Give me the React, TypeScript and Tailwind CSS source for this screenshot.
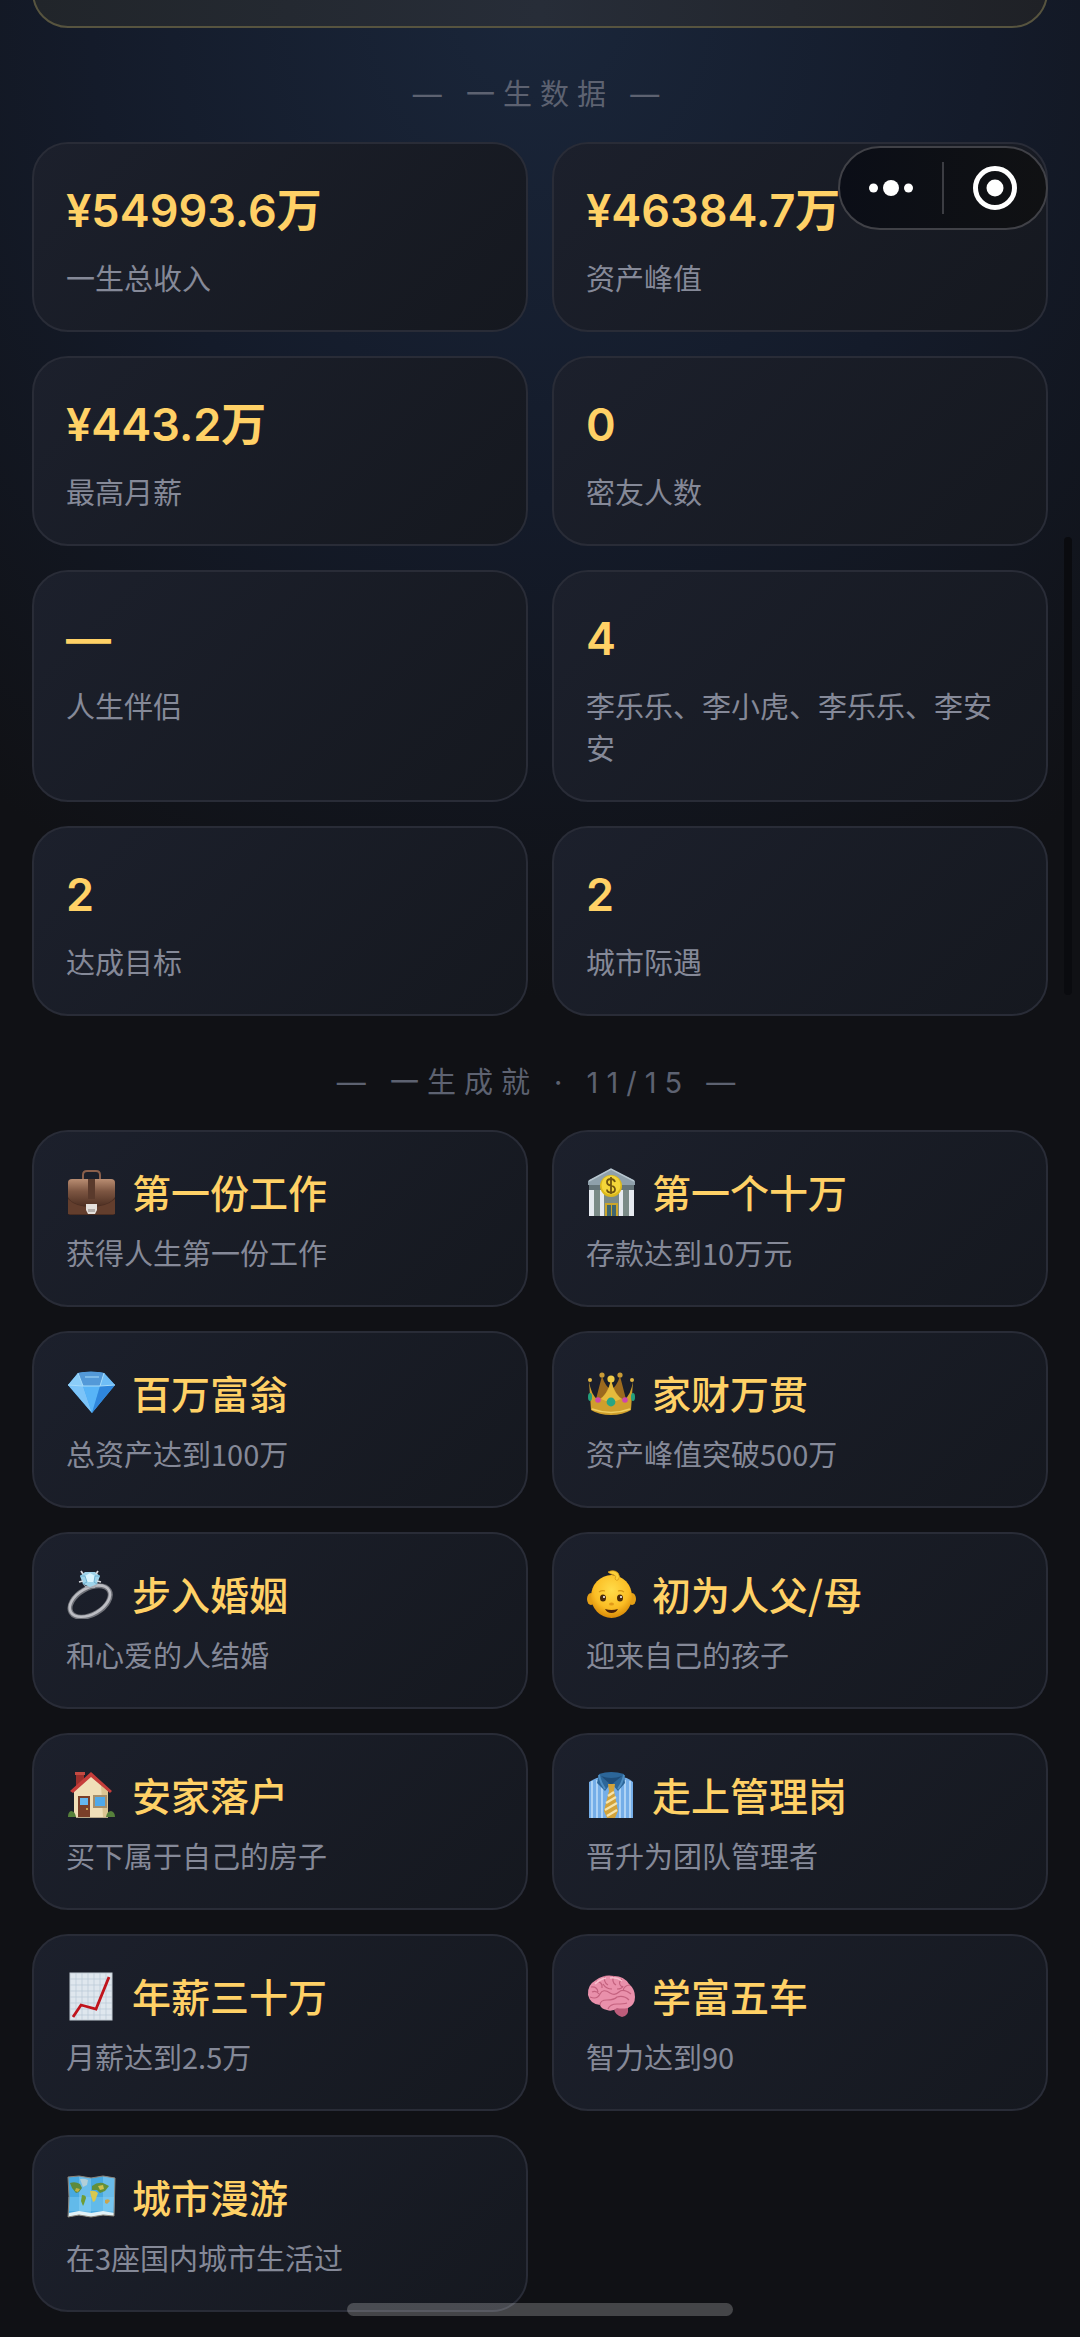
import type { ReactNode } from "react";

const stats = [
  { value: "¥54993.6万", label: "一生总收入" },
  { value: "¥46384.7万", label: "资产峰值" },
  { value: "¥443.2万", label: "最高月薪" },
  { value: "0", label: "密友人数" },
  { value: "—", label: "人生伴侣" },
  { value: "4", label: "李乐乐、李小虎、李乐乐、李安安" },
  { value: "2", label: "达成目标" },
  { value: "2", label: "城市际遇" },
];

const Briefcase = () => (
  <>
    <defs>
      <linearGradient id="case" x1="0" y1="0" x2="0" y2="1">
        <stop offset="0" stopColor="#b98d72" />
        <stop offset="0.45" stopColor="#7d5642" />
        <stop offset="1" stopColor="#4f3023" />
      </linearGradient>
    </defs>
    <path d="M16 11V7q0-4 4-4h9q4 0 4 4v4" fill="none" stroke="#8a5f4b" strokeWidth="2" />
    <rect x="1" y="12" width="47" height="35" rx="2" fill="#4b2e22" />
    <path d="M1 15q0-4 4-4h39q4 0 4 4v14q-6 9-24 9T1 29z" fill="url(#case)" />
    <path d="M1 46V31q8 8 23 8t24-8v15z" fill="#633e2d" />
    <rect x="21" y="11" width="7" height="20" fill="#5a3a2c" />
    <path d="M19 36h11v6l-2 4h-7l-2-4z" fill="#e4e0dc" />
    <path d="M21 41h7v3h-7z" fill="#b5afab" />
  </>
);

const Bank = () => (
  <>
    <path d="M2 22h45v26H2z" fill="#7b8b88" />
    <path d="M1 13 24 1l24 12v4H1z" fill="#8fa0ab" />
    <path d="m2 13 22-12 23 12" fill="none" stroke="#b7c6d0" strokeWidth="1.5" />
    <path d="M2 17h45v5H2z" fill="#66757a" />
    <path d="M2 22h5v26H2zM13 22h4v26h-4zM32 22h4v26h-4zM42 22h5v26h-5z" fill="#e6eaf0" />
    <path d="M18 35h13v13H18z" fill="#caa52c" />
    <path d="M20 37h4v11h-4zM25 37h4v11h-4z" fill="#3f6670" />
    <circle cx="24" cy="18" r="11" fill="#dcb91c" />
    <circle cx="24" cy="17" r="9.5" fill="#f4d63a" />
    <path
      d="M28 14q-1-3-4-3-4 0-4 3t4 3.500q4 1 4 4 0 3-4 3t-4-3M24 9v17"
      fill="none"
      stroke="#6f5410"
      strokeWidth="1.800"
    />
  </>
);

const Gem = () => (
  <>
    <path d="M1 16 11 4q13-3 26 0l11 12-23 28z" fill="#4aa6ee" />
    <path d="M1 16 11 4l5 13z" fill="#8bcdf8" />
    <path d="m11 4 6-1h15l5 1-4 13H16z" fill="#5399d8" />
    <path d="m37 4 11 12-15 1z" fill="#6fbdf6" />
    <path d="M1 16l15 1 9 27z" fill="#7cc4f8" />
    <path d="M16 17h17l-8 27z" fill="#58b4f7" />
    <path d="M33 17l15-1-23 28z" fill="#2f86dc" />
    <path d="M11 4 16 17h17l4-13M1 16l15 1m17 0 15-1M18 8h14" fill="none" stroke="#a8dcfa" />
  </>
);

const Crown = () => (
  <>
    <path d="M8 34 15 7q3 10 9 14 6-4 9-14l7 27z" fill="#9c6a1e" />
    <path d="M2 12q2 14 9 19 9-4 13-20 4 16 13 20 7-5 9-19l-2 29q-8 5-20 5T4 41z" fill="#cf9f2c" />
    <path d="M24 11q2 12 10 19-10 5-20 0 8-7 10-19z" fill="#e6bb3c" />
    <circle cx="15" cy="6" r="2.600" fill="#c89a36" />
    <circle cx="33" cy="6" r="2.600" fill="#c89a36" />
    <circle cx="3" cy="11" r="2" fill="#e0b545" />
    <circle cx="45" cy="11" r="2" fill="#e0b545" />
    <circle cx="24" cy="10" r="3.600" fill="#f1cc48" />
    <path d="M5 40q19 7 38 0" fill="none" stroke="#f0cf62" strokeWidth="1.500" />
    <circle cx="24" cy="33" r="4.400" fill="#28a583" />
    <circle cx="11" cy="31" r="2.800" fill="#cf46ac" />
    <circle cx="38" cy="31" r="2.800" fill="#cf46ac" />
    <ellipse cx="3" cy="28" rx="2" ry="4" fill="#23a07c" />
    <ellipse cx="46" cy="28" rx="2" ry="4" fill="#23a07c" />
  </>
);

const Ring = () => (
  <>
    <g transform="rotate(-30 24 31)">
      <ellipse cx="23" cy="31" rx="22" ry="13" fill="none" stroke="#6f7178" strokeWidth="5" />
      <ellipse cx="23" cy="30.500" rx="22" ry="13" fill="none" stroke="#bcbdc3" strokeWidth="2.600" />
    </g>
    <path d="M15 13q7 7 16 0l-3 5h-9z" fill="#a9acb4" />
    <path d="m13 6 5-4h10l5 4-3 8-7 3-7-3z" fill="#9fd4ea" />
    <path d="m18 6 5-3 5 3-1 6h-7z" fill="#d8f4fd" />
    <path d="m13 6 5 0 2 6-4 2m17-8h-5l-1 6 3 2" fill="none" stroke="#6fb2d2" />
    <path d="m14 1 2 3m15-3-2 3M12 12l4-1m18 1-4-1" stroke="#d8dade" strokeWidth="1.800" />
  </>
);

const Baby = () => (
  <>
    <defs>
      <radialGradient id="baby" cx="0.5" cy="0.35" r="0.65">
        <stop offset="0" stopColor="#ffdc4a" />
        <stop offset="0.65" stopColor="#fbbd24" />
        <stop offset="1" stopColor="#d98a08" />
      </radialGradient>
    </defs>
    <ellipse cx="4" cy="29" rx="4" ry="6" fill="#e5a016" />
    <ellipse cx="45" cy="29" rx="4" ry="6" fill="#e5a016" />
    <ellipse cx="24.500" cy="26.500" rx="20.500" ry="21.500" fill="url(#baby)" />
    <path
      d="M21 2q6-3 10 1 3 4 0 7-2 1-3-1 2-3-1-4-4-1-6-3z"
      fill="#fbcf3a"
      stroke="#d99a16"
      strokeWidth="0.800"
    />
    <ellipse cx="16" cy="28" rx="3" ry="3.500" fill="#4a2a0a" />
    <ellipse cx="33" cy="28" rx="3" ry="3.500" fill="#4a2a0a" />
    <circle cx="17" cy="27" r="1" fill="#fff" />
    <circle cx="34" cy="27" r="1" fill="#fff" />
    <path d="M12 22q3-2 6-1m13 0q3-1 6 1" fill="none" stroke="#d79613" strokeWidth="1.200" />
    <ellipse cx="24.500" cy="34" rx="2.500" ry="1.500" fill="#e19a18" />
    <path d="M18 39q6.500 2 13 0-2 4-6.500 4T18 39z" fill="#4a2209" />
  </>
);

const House = () => (
  <>
    <path d="M9 2h8v14H9z" fill="#9c2f2c" />
    <path d="M8 1h10v3H8z" fill="#c34a42" />
    <path d="M7 20 24 4l17 16v26H7z" fill="#f0dfb8" />
    <path d="M34 14l7 6v26h-5z" fill="#dcc593" />
    <path d="M3 20 24 1l21 19-2 2L24 6 6 22z" fill="#c63d3a" />
    <path d="M11 25h12v21H11z" fill="#7a3f29" />
    <path d="M13 27h8v7h-8z" fill="#65b6ee" />
    <path d="M26 24h14v13H26z" fill="#a58f6c" />
    <path d="M28 26h10v9H28z" fill="#4fa9ea" />
    <circle cx="20" cy="38" r="1" fill="#e8c25a" />
    <path d="M1 46q0-5 3-6 4 0 5 6zM39 46q1-6 5-6 4 1 4 6z" fill="#56803b" />
    <path d="M9 46h32v1H9z" fill="#b9a98b" />
  </>
);

const Tie = () => (
  <>
    <path d="M2 11q6-4 12-5h21q7 1 11 5v36H2z" fill="#75aee8" />
    <path
      d="M5 10v37m5-38v38m5-36v36m18-36v36m5-38v38m5-37v37"
      stroke="#b5d8f7"
      strokeWidth="1.800"
    />
    <path d="M12 3q12-4 25 0l1 9-7 8-7-8-6 8-8-8z" fill="#2c6699" />
    <path d="M14 5q10 4 21 0l-11 9z" fill="#1f4d79" />
    <path d="M12 4q1 7 6 14m19-14q-1 7-6 14" fill="none" stroke="#4d8cc0" strokeWidth="2" />
    <path d="M21 13h7l-1 7 4 20-3 7h-8l-3-7 5-20z" fill="#d3a33a" />
    <path d="m21 25 6-4m-8 11 10-6M18 39l12-7m-10 13 10-6" stroke="#f4e3ad" strokeWidth="2.200" />
  </>
);

const Chart = () => (
  <>
    <rect x="3" y="1" width="42" height="47" fill="#dfe7ee" />
    <path
      d="M9 1v47m6-47v47m6-47v47m6-47v47m6-47v47M39 1v47M3 7h42M3 13h42M3 19h42M3 25h42M3 31h42M3 37h42M3 43h42"
      stroke="#b9c9d6"
      strokeWidth="0.700"
    />
    <path d="m6 45 8-12 15 4L42 5" fill="none" stroke="#c0141c" strokeWidth="2.800" />
    <rect x="3" y="1" width="42" height="47" fill="none" stroke="#c2cbd3" />
  </>
);

const Brain = () => (
  <>
    <path d="M27 34q9-2 14 2 1 8-6 9-7-2-8-8z" fill="#bd5d7b" />
    <path
      d="M1 23Q0 13 9 8q8-6 18-4 10 0 15 8 6 5 6 13 0 8-7 11-7 1-11 0-5 4-10 2-6-1-7-5Q3 32 1 23z"
      fill="#e990ab"
    />
    <path
      d="M4 15q6-1 7 5m-2-11q7 1 6 7m3-12q-2 6 3 9M27 4q-3 6 2 9m6-6q-5 4 0 8m8-2q-6 0-7 6M3 25q7 3 10-3t10-1q5 3 9-1t12 2M13 33q0-5 7-5t10-3q7-2 12 3m-21 9q2-5 9-5t10-1M16 12q3 5 9 5m5 0q5 0 6-3M5 20q4-2 7 2"
      fill="none"
      stroke="#c4627f"
      strokeWidth="1.200"
    />
    <path d="M8 12q5-5 11-6m4 0q7-1 12 3" fill="none" stroke="#f8bfce" strokeWidth="1.400" />
  </>
);

const WorldMap = () => (
  <>
    <path d="M1 4 12 3l12 2 12-2 12 2-1 38-11-1-12 2-12-2-11 2 1-20z" fill="#48a9e0" />
    <path d="M12 3l12 2v39l-12-2zM36 3l12 2-1 38-11-1z" fill="#6abcea" />
    <path d="M1 24h46l-1 14H2z" fill="#8ad4fa" opacity="0.400" />
    <path d="M2 40l10-2 12 2 12-2 11 2v3l-11-1-12 2-12-2-11 2z" fill="#e3f2f7" />
    <path d="M13 6q4-1 8 1l-1 5-4 2z" fill="#b3cfd8" />
    <path d="M3 10q5-2 10 1l2 4-3 4-3 1-4-5z" fill="#5d8a3d" />
    <path d="M9 15l4 1-2 3-3-1z" fill="#c0b03f" />
    <path d="M15 22q4 0 4 3l-2 6-1 2-2-5z" fill="#6f9c35" />
    <path d="M25 13q5-4 11-3l6 3-4 5-5 2-3-3-5 0z" fill="#62903b" />
    <path d="M23 18q5-1 8 2l-3 8-2 1-2-6z" fill="#d9c84f" />
    <path d="M31 13l5-1 1 4-4 1z" fill="#cfc04c" />
    <path d="M38 27q4-2 5 1l-3 3-2-1z" fill="#c9a550" />
    <path
      d="M1 4 12 3l12 2 12-2 12 2-1 38-11-1-12 2-12-2-11 2 1-20z"
      fill="none"
      stroke="#8d8478"
    />
  </>
);

const achievements: { icon: ReactNode; title: string; text: string }[] = [
  { icon: <Briefcase />, title: "第一份工作", text: "获得人生第一份工作" },
  { icon: <Bank />, title: "第一个十万", text: "存款达到10万元" },
  { icon: <Gem />, title: "百万富翁", text: "总资产达到100万" },
  { icon: <Crown />, title: "家财万贯", text: "资产峰值突破500万" },
  { icon: <Ring />, title: "步入婚姻", text: "和心爱的人结婚" },
  { icon: <Baby />, title: "初为人父/母", text: "迎来自己的孩子" },
  { icon: <House />, title: "安家落户", text: "买下属于自己的房子" },
  { icon: <Tie />, title: "走上管理岗", text: "晋升为团队管理者" },
  { icon: <Chart />, title: "年薪三十万", text: "月薪达到2.5万" },
  { icon: <Brain />, title: "学富五车", text: "智力达到90" },
  { icon: <WorldMap />, title: "城市漫游", text: "在3座国内城市生活过" },
];

const SectionTitle = ({ children }: { children: ReactNode }) => (
  <h2 className="pt-[46px] pb-[26px] text-center font-['Inter','Noto_Sans_CJK_SC',sans-serif] text-[29px] leading-[42px] tracking-[8px] text-[#5d6271]">
    {children}
  </h2>
);

const Card = ({ children }: { children: ReactNode }) => (
  <div className="flex flex-col rounded-[36px] border-2 border-[#292c37] bg-linear-135 from-[#1c202c] to-[#15181f] p-8">
    {children}
  </div>
);

// Mini program capsule: menu and close
const Capsule = () => (
  <div className="fixed top-[146px] right-8 flex h-[84px] w-[210px] items-center rounded-full border-2 border-[#404147] bg-linear-to-r from-[#0b0e17] to-[#101113]">
    <button aria-label="更多" className="flex h-full flex-1 items-center justify-center">
      <svg className="h-4 w-11" viewBox="0 0 44 16" fill="#fff">
        <circle cx="4.500" cy="8" r="4.500" />
        <circle cx="22" cy="8" r="8" />
        <circle cx="39.500" cy="8" r="4.500" />
      </svg>
    </button>
    <span className="h-[52px] w-0.5 bg-[#3c3d43]" />
    <button aria-label="关闭" className="flex h-full flex-1 items-center justify-center">
      <svg className="size-11" viewBox="0 0 44 44">
        <circle cx="22" cy="22" r="19.500" fill="none" stroke="#fff" strokeWidth="5" />
        <circle cx="22" cy="22" r="8.500" fill="#fff" />
      </svg>
    </button>
  </div>
);

const App = () => (
  <main className="min-h-screen overflow-hidden bg-[#101115] bg-[radial-gradient(ellipse_900px_1000px_at_50%_0,#1a263a_0%,#141b2a_50%,#101115_100%)] px-8 pb-6 font-['Noto_Sans_CJK_SC',sans-serif]">
    <div className="-mt-12 h-[76px] rounded-[36px] border-2 border-[#57543f] bg-linear-to-r from-[#21252a] via-[#272d38] to-[#1f2126]" />

    <section>
      <SectionTitle>— 一生数据 —</SectionTitle>
      <div className="grid grid-cols-2 gap-6">
        {stats.map((stat, idx) => (
          <Card key={idx}>
            <p className="mb-2.5 font-['Inter','Noto_Sans_CJK_SC',sans-serif] text-[45px] leading-[70px] font-semibold text-[#ffd166]">
              {stat.value}
            </p>
            <p className="text-[29px] leading-[42px] text-[#858998]">{stat.label}</p>
          </Card>
        ))}
      </div>
    </section>

    <section>
      <SectionTitle>— 一生成就 · 11/15 —</SectionTitle>
      <div className="grid grid-cols-2 gap-6">
        {achievements.map((item) => (
          <Card key={item.title}>
            <h3 className="mb-3 flex items-center gap-4 text-[39px] leading-[55px] font-medium text-[#ffd166]">
              <svg className="size-[50px] shrink-0" viewBox="-1 -1 50 50" aria-hidden="true">
                {item.icon}
              </svg>
              {item.title}
            </h3>
            <p className="text-[29px] leading-[42px] text-[#858998]">{item.text}</p>
          </Card>
        ))}
      </div>
    </section>

    <Capsule />
    <div className="fixed top-[537px] right-2 h-[458px] w-2 rounded-full bg-[#0a0b0f]" />
    <div className="fixed bottom-[21px] left-1/2 h-[13px] w-[386px] -translate-x-1/2 rounded-full bg-white/22" />
  </main>
);

export default App;
